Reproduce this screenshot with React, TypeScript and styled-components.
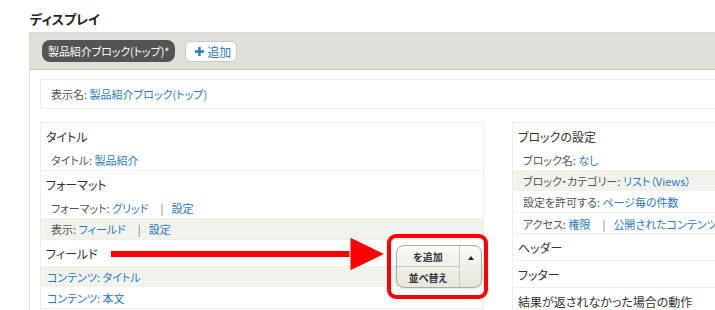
import styled, { createGlobalStyle } from "styled-components";

const GlobalStyle = createGlobalStyle`
  body {
    margin: 0;
    background: #fff;
    color: #333;
    font-family: "Noto Sans CJK JP", "Noto Sans", sans-serif;
    font-feature-settings: "palt" 1;
    overflow: hidden;
  }
`;

const Page = styled.div`
  position: relative;
  box-sizing: border-box;
  width: 715px;
  height: 310px;
  padding: 11px 0 0 29px;
  overflow: hidden;
`;

const PageTitle = styled.h2`
  margin: 0 0 6px 1px;
  font-size: 13px;
  font-weight: bold;
  line-height: 15px;
  color: #222;
`;

const Panel = styled.div`
  width: 900px;
  border-left: 1px solid #dcdcdc;
`;

const TabBar = styled.div`
  display: flex;
  align-items: flex-start;
  gap: 10px;
  height: 38px;
  box-sizing: border-box;
  padding: 7px 12px 0;
  background: #e0e0da;
  border-top: 1px solid #d6d6d2;
  border-bottom: 1px solid #c9c9c4;
`;

const Tab = styled.div`
  height: 22px;
  padding: 0 6px 0 6px;
  border-radius: 8px;
  background: #545454;
  color: #fff;
  font-size: 11px;
  letter-spacing: -0.1px;
  line-height: 22px;
  white-space: nowrap;
`;

const AddButton = styled.div`
  display: flex;
  align-items: center;
  gap: 3px;
  height: 21px;
  box-sizing: border-box;
  margin-top: 1px;
  padding: 0 5px 0 9px;
  border: 1px solid #cbcbc6;
  border-radius: 6px;
  background: #fff;
  color: #2a7ac0;
  font-size: 12px;
`;

const Content = styled.div`
  padding: 9px 0 0 10px;
`;

const DisplayName = styled.div`
  height: 30px;
  box-sizing: border-box;
  padding-left: 10px;
  border: 1px solid #efefef;
  font-size: 11px;
  line-height: 29px;
`;

const Columns = styled.div`
  display: flex;
  align-items: flex-start;
  gap: 28px;
  margin-top: 13px;
`;

const Column = styled.div<{ $width: number }>`
  width: ${(p) => p.$width}px;
  box-sizing: border-box;
  border: 1px solid #eee;
  border-bottom: none;
`;

const Section = styled.div`
  border-bottom: 1px solid #eee;
`;

const SectionHeader = styled.div`
  height: 26px;
  box-sizing: border-box;
  padding: 2px 0 0 5px;
  font-size: 12px;
  line-height: 24px;
  color: #333;
`;

const Row = styled.div<{ $shaded?: boolean; $flush?: boolean; $divided?: boolean }>`
  height: 21px;
  box-sizing: border-box;
  padding: 1px 0 0 ${(p) => (p.$flush ? 6 : 10)}px;
  background: ${(p) => (p.$shaded ? "#f3f3ee" : "transparent")};
  border-top: ${(p) => (p.$divided ? "1px solid #eee" : "none")};
  font-size: 11px;
  line-height: 20px;
  white-space: nowrap;
`;

const Label = styled.span`
  color: #555;
`;

const Link = styled.span`
  color: #2a7ac0;
`;

const Sep = styled.span`
  margin: 0 8px 0 12px;
  color: #777;
`;

const Annotation = styled.div`
  position: absolute;
  left: 108px;
  top: 234px;
  display: flex;
  align-items: flex-start;
`;

const Arrow = styled.svg`
  display: block;
`;

const Highlight = styled.div`
  box-sizing: border-box;
  width: 101px;
  height: 65px;
  margin-left: -1px;
  padding: 7px 0 0 5px;
  border: 4px solid #f00;
  border-radius: 9px;
`;

const ButtonGroup = styled.div`
  display: grid;
  grid-template-columns: 62px 1fr;
  width: 86px;
  height: 43px;
  box-sizing: border-box;
  border: 1px solid #aaaaa0;
  border-radius: 8px;
  overflow: hidden;
  background: linear-gradient(#fbfbf7, #e6e6de);
  box-shadow: 0 1px 2px rgba(0, 0, 0, 0.12);
`;

const Actions = styled.div`
  display: flex;
  flex-direction: column;
`;

const ActionButton = styled.div<{ $first?: boolean }>`
  flex: 1;
  display: flex;
  align-items: center;
  justify-content: center;
  border-bottom: ${(p) => (p.$first ? "1px solid #c9c9c0" : "none")};
  font-size: 10px;
  font-weight: bold;
  color: #333;
`;

const Toggle = styled.div`
  display: flex;
  justify-content: center;
  padding-top: 10px;
  border-left: 1px solid #c9c9c0;
`;

const Caret = styled.div`
  width: 0;
  height: 0;
  border-left: 3.5px solid transparent;
  border-right: 3.5px solid transparent;
  border-bottom: 4px solid #222;
`;

const PlusIcon = () => (
  <svg width="9" height="9" viewBox="0 0 9 9">
    <path d="M3.3 0h2.4v3.3H9v2.4H5.7V9H3.3V5.7H0V3.3h3.3z" fill="#2a7ac0" />
  </svg>
);

const App = () => {
  return (
    <Page>
      <GlobalStyle />
      <PageTitle>ディスプレイ</PageTitle>
      <Panel>
        <TabBar>
          <Tab>製品紹介ブロック(トップ)*</Tab>
          <AddButton>
            <PlusIcon />
            追加
          </AddButton>
        </TabBar>
        <Content>
          <DisplayName>
            <Label>表示名: </Label>
            <Link>製品紹介ブロック(トップ)</Link>
          </DisplayName>
          <Columns>
            <Column $width={446}>
              <Section>
                <SectionHeader>タイトル</SectionHeader>
                <Row>
                  <Label>タイトル: </Label>
                  <Link>製品紹介</Link>
                </Row>
              </Section>
              <Section>
                <SectionHeader>フォーマット</SectionHeader>
                <Row>
                  <Label>フォーマット: </Label>
                  <Link>グリッド</Link>
                  <Sep>|</Sep>
                  <Link>設定</Link>
                </Row>
                <Row $shaded>
                  <Label>表示: </Label>
                  <Link>フィールド</Link>
                  <Sep>|</Sep>
                  <Link>設定</Link>
                </Row>
              </Section>
              <Section>
                <SectionHeader>フィールド</SectionHeader>
                <Row $shaded $flush>
                  <Link>コンテンツ: タイトル</Link>
                </Row>
                <Row $flush>
                  <Link>コンテンツ: 本文</Link>
                </Row>
              </Section>
            </Column>
            <Column $width={420}>
              <Section>
                <SectionHeader>ブロックの設定</SectionHeader>
                <Row>
                  <Label>ブロック名: </Label>
                  <Link>なし</Link>
                </Row>
                <Row $shaded>
                  <Label>ブロック・カテゴリー: </Label>
                  <Link>リスト（Views）</Link>
                </Row>
                <Row>
                  <Label>設定を許可する: </Label>
                  <Link>ページ毎の件数</Link>
                </Row>
                <Row $divided>
                  <Label>アクセス: </Label>
                  <Link>権限</Link>
                  <Sep>|</Sep>
                  <Link>公開されたコンテンツを表示</Link>
                </Row>
              </Section>
              <Section>
                <SectionHeader>ヘッダー</SectionHeader>
              </Section>
              <Section>
                <SectionHeader>フッター</SectionHeader>
              </Section>
              <Section>
                <SectionHeader>結果が返されなかった場合の動作</SectionHeader>
              </Section>
            </Column>
          </Columns>
        </Content>
      </Panel>

      <Annotation>
        <Arrow width="280" height="40" viewBox="0 0 280 40">
          <rect x="3" y="17" width="243" height="6" fill="#f00" />
          <polygon
            points="242,3 277,20 242,37"
            fill="#f00"
            stroke="#fff"
            strokeWidth="1"
          />
        </Arrow>
        <Highlight>
          <ButtonGroup>
            <Actions>
              <ActionButton $first>を追加</ActionButton>
              <ActionButton>並べ替え</ActionButton>
            </Actions>
            <Toggle>
              <Caret />
            </Toggle>
          </ButtonGroup>
        </Highlight>
      </Annotation>
    </Page>
  );
};

export default App;
